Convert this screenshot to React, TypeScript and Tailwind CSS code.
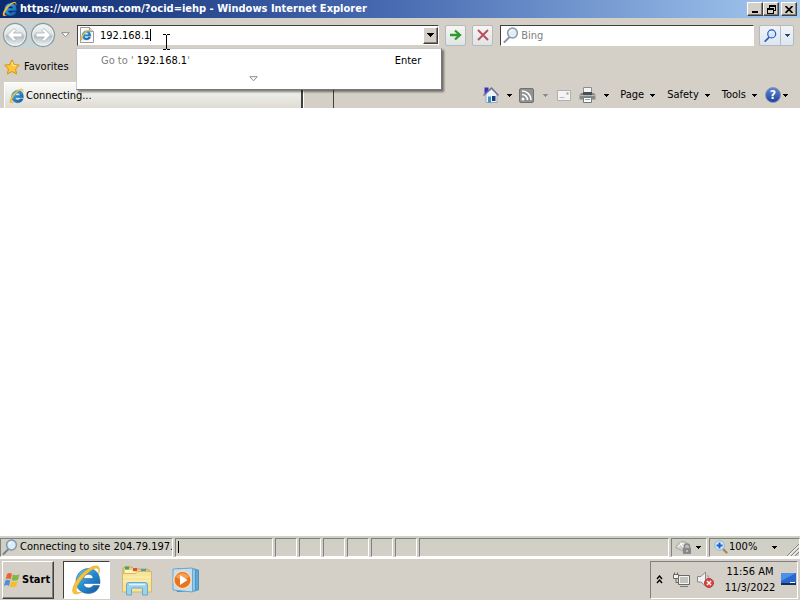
import React, { useId, useState } from "react";

function IELogo({ className }: { className: string }) {
  const id = useId();
  return (
    <svg viewBox="0 0 32 32" className={className} aria-hidden="true">
      <defs>
        <linearGradient id={id} x1="0" y1="0" x2="1" y2="1">
          <stop offset="0" stopColor="#69c8f4" />
          <stop offset=".5" stopColor="#2389cf" />
          <stop offset="1" stopColor="#14559e" />
        </linearGradient>
      </defs>
      <path d="M29 19.500H12.500c.3 2.700 2.200 4.400 5 4.400 2 0 3.600-.9 4.500-2.300h6.500C27 26.600 23 29.500 17.500 29.500 10.500 29.500 5 24.700 5 17.500 5 10 10.500 4.500 17.500 4.500S29.300 10 29 19.500ZM12.500 14.500h9.700c-.4-2.700-2-4.200-4.700-4.200s-4.500 1.500-5 4.200Z" fill={`url(#${id})`} stroke="#16528f" strokeWidth=".5" />
      <path d="M27.500 10.500c2-5 1.300-8.700-2.500-8.700C18 1.800 3 15 1.600 26c-.4 4.500 3.400 5.300 9.100 2-4 1.200-6.100.2-5.300-3C7 17.500 18.500 5.500 24.500 4.200c3-.5 3.800 2 3 6.300Z" fill="#f6c338" stroke="#d9a01c" strokeWidth=".4" />
    </svg>
  );
}

function Down({ className }: { className: string }) {
  return (
    <svg viewBox="0 0 5 3" className={`h-[3px] w-[5px] shrink-0 ${className}`} shapeRendering="crispEdges" aria-hidden="true">
      <path d="M0 0h5v1H4v1H3v1H2V2H1V1H0Z" fill="currentColor" />
    </svg>
  );
}

function HollowDown() {
  return (
    <svg viewBox="0 0 9 6" className="h-[6px] w-[9px] shrink-0 text-[#8c8c8c]" aria-hidden="true">
      <path d="M.8.7h7.400L4.500 4.800Z" fill="#fff" stroke="currentColor" />
    </svg>
  );
}

function RoundArrow({ back = false }: { back?: boolean }) {
  const id = useId();
  return (
    <svg viewBox="0 0 26 26" className="size-[26px]" aria-hidden="true">
      <defs>
        <linearGradient id={id} x1="0" y1="0" x2="0" y2="1">
          <stop offset="0" stopColor="#f4f7f7" />
          <stop offset=".45" stopColor="#dce2e3" />
          <stop offset=".55" stopColor="#b5bfc2" />
          <stop offset="1" stopColor="#eef6f6" />
        </linearGradient>
      </defs>
      <circle cx="13" cy="13" r="11.500" fill={`url(#${id})`} stroke="#909a9e" strokeWidth="1.300" />
      <circle cx="13" cy="13" r="10.200" fill="none" stroke="#eef3f4" strokeWidth="1" />
      <path transform={back ? undefined : "matrix(-1 0 0 1 26 0)"} d="M5.500 13l6.500-6.500 2 2L11.500 11H20v4h-8.500l2.500 2.500-2 2Z" fill="#fff" stroke="#9da7ab" strokeWidth=".7" />
    </svg>
  );
}

function Lens({ className, stroke, fill, handle }: { className: string; stroke: string; fill: string; handle: string }) {
  return (
    <svg viewBox="0 0 16 16" className={className} aria-hidden="true">
      <path d="M6.500 10 1.500 15" stroke={handle} strokeWidth="2" strokeLinecap="round" />
      <circle cx="9.500" cy="6" r="4.900" fill={fill} stroke={stroke} strokeWidth="1.500" />
      <path d="M7 5.500a2.800 2.800 0 0 1 2.500-2.300" fill="none" stroke="#fff" />
    </svg>
  );
}

const raised = "border border-t-white border-l-white border-r-[#404040] border-b-[#404040] bg-[#d4d0c8] shadow-[inset_-1px_-1px_0_#808080]";
const sunken = "border border-t-[#808080] border-l-[#808080] border-r-white border-b-white";

function TitleBar() {
  return (
    <header className="flex h-[18px] items-center bg-linear-to-r from-[#0c2a70] via-[#4a6cb2] to-[#a6caf0] pr-[3px] pl-[2px]">
      <IELogo className="size-4" />
      <h1 className="ml-[2px] flex-1 text-[11px] leading-[18px] font-bold whitespace-nowrap text-white">
        https://www.msn.com/?ocid=iehp - Windows Internet Explorer
      </h1>
      <button aria-label="Minimize" className={`flex h-[14px] w-4 items-end justify-center pb-[2px] ${raised}`}>
        <span className="h-[2px] w-[6px] bg-black" />
      </button>
      <button aria-label="Restore" className={`flex h-[14px] w-4 items-center justify-center ${raised}`}>
        <svg viewBox="0 0 9 9" className="size-[9px]" shapeRendering="crispEdges" fill="none" stroke="#000">
          <path d="M2.500 3V.5h6v5H7M2 1.500h7M.5 3.500h6v5h-6ZM0 4.500h7" />
        </svg>
      </button>
      <button aria-label="Close" className={`ml-[2px] flex h-[14px] w-4 items-center justify-center ${raised}`}>
        <svg viewBox="0 0 8 7" className="h-[7px] w-2" stroke="#000" strokeWidth="1.700">
          <path d="M.5 0l7 7M7.500 0l-7 7" />
        </svg>
      </button>
    </header>
  );
}

function Suggestions({ value }: { value: string }) {
  return (
    <div className="absolute top-[22px] -right-[4px] -left-[2px] z-10 h-[42px] border border-[#c8c8c8] border-r-[#777] border-b-[#777] bg-white shadow-[2px_2px_2px_#0007]">
      <div className="flex h-6 items-center pr-[20px] pl-[24px]">
        <span className="flex-1 text-[#808080]">
          Go to ' <span className="text-black">{value}</span>'
        </span>
        <span>Enter</span>
      </div>
      <div className="flex h-3 items-center justify-center pr-3">
        <HollowDown />
      </div>
      <svg viewBox="0 0 7 16" className="absolute -top-[15px] left-[86px] h-4 w-[7px]" fill="none" stroke="#000" aria-hidden="true">
        <path d="M0 .5h3M4 .5h3M3.500 1v14M0 15.500h3M4 15.500h3" />
      </svg>
    </div>
  );
}

function NavBar() {
  const [address, setAddress] = useState("192.168.1");
  return (
    <div className="flex h-[34px] items-center pr-[6px] pl-[2px]">
      <div className="flex gap-[2px] rounded-full bg-[#c9d3d4]">
        <button aria-label="Back"><RoundArrow back /></button>
        <button aria-label="Forward"><RoundArrow /></button>
      </div>
      <button aria-label="Recent pages" className="mr-[7px] ml-[5px]"><HollowDown /></button>
      <div className="relative flex h-[21px] min-w-0 flex-[363_1_0%] items-center border border-t-[#404040] border-l-[#404040] border-r-white border-b-[#d4d0c8] bg-white pl-[2px]">
        <svg viewBox="0 0 14 16" className="h-4 w-[14px] shrink-0" aria-hidden="true">
          <path d="M.5.5h9l4 4v11H.5Z" fill="#fafafa" stroke="#9b9b9b" />
          <path d="M9.500.5v4h4" fill="#ddd" stroke="#9b9b9b" />
        </svg>
        <IELogo className="-ml-[14px] size-3 shrink-0" />
        <input aria-label="Address" value={address} onChange={(e) => setAddress(e.target.value)} className="field-sizing-content ml-2 h-[18px] outline-none" />
        <span className="h-3 w-px bg-black" />
        <button aria-label="Show address list" className={`ml-auto flex h-[17px] w-[15px] items-center justify-center ${raised}`}>
          <svg viewBox="0 0 7 4" className="h-1 w-[7px]" shapeRendering="crispEdges"><path d="M0 0h7v1H6v1H5v1H4v1H3V3H2V2H1V1H0Z" /></svg>
        </button>
        <Suggestions value={address} />
      </div>
      <button aria-label="Go" className="ml-[6px] flex size-[21px] items-center justify-center rounded-xs border border-[#b4b9bd] bg-linear-to-b from-[#f5f6f4] to-[#dfe4e5]">
        <svg viewBox="0 0 13 12" className="h-3 w-[13px]"><path d="M1 6h10M6 1.500 11 6l-5 4.500" fill="none" stroke="#2f9a28" strokeWidth="2.300" /></svg>
      </button>
      <button aria-label="Stop" className="ml-[6px] flex size-[21px] items-center justify-center rounded-xs border border-[#b4b9bd] bg-linear-to-b from-[#f5f6f4] to-[#dfe4e5]">
        <svg viewBox="0 0 12 12" className="size-3"><path d="M1 1l10 10M11 1 1 11" stroke="#b9505e" strokeWidth="2" /></svg>
      </button>
      <div className="ml-[7px] flex h-[21px] min-w-0 flex-[253_1_0%] items-center border border-t-[#404040] border-l-[#404040] border-r-white border-b-white bg-white pl-[2px]">
        <Lens className="size-4 shrink-0" stroke="#8d98a8" fill="#e3edf5" handle="#8d98a8" />
        <input aria-label="Search" placeholder="Bing" className="ml-[2px] h-[18px] min-w-0 flex-1 outline-none placeholder:text-[#808080]" />
      </div>
      <div className="ml-[5px] flex h-[21px] w-[35px] rounded-xs border border-[#b4b9bd] bg-linear-to-b from-[#eff4f8] to-[#dce6f0]">
        <button aria-label="Run search" className="flex w-[21px] items-center justify-center border-r border-[#b4bcc8]">
          <Lens className="size-[13px]" stroke="#2c59bd" fill="#d6e7fa" handle="#2c59bd" />
        </button>
        <button aria-label="Search options" className="flex flex-1 items-center justify-center"><Down className="text-[#264a70]" /></button>
      </div>
    </div>
  );
}

function CommandBar() {
  return (
    <nav className="flex h-[26px] flex-1 items-center justify-end border-l border-[#404040] pr-[12px]">
      <button aria-label="Home" className="flex items-center gap-2">
        <svg viewBox="0 0 16 16" className="size-4">
          <path d="M1.500.5h4v4.500l-4 2Z" fill="#3a30c0" />
          <path d="M3 7v8.500h11V7L8.500 2Z" fill="#eef3f7" stroke="#9aaab8" />
          <path d="M.5 8.500 8.500 1l7 7.500" fill="none" stroke="#6c7290" strokeWidth="1.400" />
          <path d="M5 9.500h3v6H5Z" fill="#3b91c9" />
          <path d="M9 9h3.500v5H9Z" fill="#173a78" />
        </svg>
        <Down className="text-black" />
      </button>
      <button aria-label="Feeds" className="ml-[7px] flex items-center gap-[9px]">
        <svg viewBox="0 0 15 15" className="size-[15px]">
          <rect x=".5" y=".5" width="14" height="14" rx="1.500" fill="#929292" stroke="#707070" />
          <circle cx="4" cy="11" r="1.500" fill="#fff" />
          <path d="M3 6.500a5.500 5.500 0 0 1 5.500 5.500M3 3a9 9 0 0 1 9 9" fill="none" stroke="#fff" strokeWidth="1.600" />
        </svg>
        <Down className="text-[#8c8c8c]" />
      </button>
      <button aria-label="Read mail" className="ml-[9px]">
        <svg viewBox="0 0 14 11" className="h-[11px] w-[14px]">
          <path d="M.5.5h13v10H.5Z" fill="#f4f4f4" stroke="#b0b0b0" />
          <path d="M2.500 7.500h5" stroke="#bbb" />
          <path d="M9.500 2.500h2v2h-2Z" fill="#9a9a9a" />
        </svg>
      </button>
      <button aria-label="Print" className="ml-2 flex items-center gap-2">
        <svg viewBox="0 0 17 16" className="h-4 w-[17px]">
          <path d="M4.500.5h8v6h-8Z" fill="#f5f5f5" stroke="#8c8c8c" />
          <path d="M2 6h13l1.500 2v4.500H.5V8Z" fill="#85898a" />
          <path d="M4 5h9v3H4Z" fill="#4a4f52" />
          <path d="M1 8.500h15" stroke="#b5babc" />
          <path d="M4.500 10.500h8v5h-8Z" fill="#fff" stroke="#737a7d" />
          <path d="M6 12.500h5" stroke="#70af8b" />
        </svg>
        <Down className="text-black" />
      </button>
      <button className="ml-[11px] flex items-center gap-[6px]">Page<Down className="text-black" /></button>
      <button className="ml-[12px] flex items-center gap-[6px]">Safety<Down className="text-black" /></button>
      <button className="ml-[12px] flex items-center gap-[6px]">Tools<Down className="text-black" /></button>
      <button aria-label="Help" className="ml-2 flex items-center gap-[2px]">
        <span className="flex size-4 items-center justify-center rounded-full border border-[#8394b5] bg-linear-to-b from-[#5d84d2] to-[#1c459c] text-[12px] font-bold text-white">?</span>
        <Down className="text-black" />
      </button>
    </nav>
  );
}

function StatusBar() {
  return (
    <footer className="flex h-[22px] items-center gap-[2px] border-t border-b border-t-[#d4d0c8] border-b-white bg-linear-to-b from-[#cdcfc2] to-[#d4d0c8] py-px">
      <div className={`flex h-[19px] w-[173px] items-center gap-[2px] overflow-hidden pl-px whitespace-nowrap ${sunken}`}>
        <Lens className="size-4 shrink-0" stroke="#8496ad" fill="#dcecf8" handle="#7c8490" />
        <span>Connecting to site 204.79.197.</span>
      </div>
      <div className={`flex h-[19px] w-[98px] items-center pl-[2px] ${sunken}`}><span className="h-3 w-px bg-black" /></div>
      {[0, 1, 2, 3, 4, 5].map((n) => <div key={n} className={`h-[19px] w-[22px] ${sunken}`} />)}
      <div className={`h-[19px] flex-1 ${sunken}`} />
      <button aria-label="Security" className={`flex h-[19px] w-9 items-center justify-between pr-[5px] pl-[3px] ${sunken}`}>
        <svg viewBox="0 0 17 15" className="h-[15px] w-[17px]">
          <path d="M1 8a7 7 0 0 1 11-5v5H8v3Z" fill="#cfd0cc" stroke="#a8a8a8" />
          <path d="M3 7l3-3 2 3M5 3l4 1" stroke="#fff" fill="none" />
          <path d="M9.500 8V6.500a2.500 2.500 0 0 1 5 0V8" fill="none" stroke="#888" strokeWidth="1.500" />
          <path d="M8 8h8v6H8Z" fill="#888" />
          <path d="M12 10v2" stroke="#eee" />
        </svg>
        <Down className="text-black" />
      </button>
      <div className={`flex h-[19px] w-[91px] items-center overflow-hidden pl-[4px] ${sunken}`}>
        <button className="flex flex-1 items-center">
          <svg viewBox="0 0 14 14" className="mr-px size-[14px]">
            <path d="M8 8l4.500 4.500" stroke="#a68664" strokeWidth="2.400" strokeLinecap="round" />
            <circle cx="5.500" cy="5.500" r="4.800" fill="#d7edff" stroke="#8dafd0" />
            <path d="M5.500 2.500v6M2.500 5.500h6" stroke="#1d64c2" strokeWidth="2" />
          </svg>
          100%
          <Down className="ml-[15px] text-black" />
        </button>
        <svg viewBox="0 0 12 12" className="size-3 self-end" stroke="#858585"><path d="M0 12 12 0M4 12l8-8M8 12l4-4" /><path d="M1 12.500 12 1.500M5 12.500l7-7" stroke="#fff" /></svg>
      </div>
    </footer>
  );
}

function Taskbar() {
  return (
    <footer className="flex h-[42px] items-center border-t border-white bg-[#d4d0c8] pr-[2px] pl-[2px]">
      <button className={`flex h-[38px] w-[52px] items-center gap-[2px] pl-px font-bold ${raised}`}>
        <svg viewBox="0 0 16 16" className="size-4">
          <path d="M3 2c2-1.500 3.500-1 5 0L6.600 7.500c-1.500-1-3-1.500-5 0Z" fill="#ed6134" />
          <path d="M9 2.500c2 1 4 1 6.500-.3L14 7.700c-2 1.200-4.500 1.200-6.500.3Z" fill="#80b843" />
          <path d="M1.300 8.700c2-1.500 3.500-1 5 0L4.900 14c-1.500-1-3-1.500-5 0Z" fill="#4b91d4" />
          <path d="M7.200 9.300c2 1 4 1 6.500-.3l-1.500 5.300c-2 1.200-4.500 1.200-6.500.3Z" fill="#f5bd27" />
        </svg>
        Start
      </button>
      <button aria-label="Internet Explorer" className="ml-[9px] flex h-[38px] w-[47px] items-center justify-center border border-t-[#404040] border-l-[#404040] border-r-white border-b-white bg-white">
        <IELogo className="size-8" />
      </button>
      <button aria-label="Windows Explorer" className="ml-[10px]">
        <svg viewBox="0 0 34 32" className="h-8 w-[34px]">
          <path d="M3 4.500 4.500 3H12l2 2h13l3 2v19H3Z" fill="#edcf77" stroke="#c5a657" />
          <path d="M5 2.500h4v3H5Z" fill="#45a55b" />
          <path d="M13 4h4v3h-4Z" fill="#d35440" />
          <path d="M21 5h5v3h-5Z" fill="#4d9acd" />
          <path d="M5 6h7l2 2h15v4H5Z" fill="#fff4bd" />
          <path d="M2.500 9.500H16l2-2h13.500v20.500h-29Z" fill="#f6e49a" stroke="#d3b865" />
          <path d="M3 13h28M3 17h28" stroke="#fff1b2" />
          <path d="M6.500 31V21q0-2.500 2.500-2.500h16q2.500 0 2.500 2.500v10h-5v-6q0-1-1-1h-9q-1 0-1 1v6Z" fill="#9bd2ec" stroke="#6aa8cc" />
          <path d="M9 20.500h16" stroke="#dff4ff" strokeWidth="1.500" />
        </svg>
      </button>
      <button aria-label="Windows Media Player" className="ml-[18px]">
        <svg viewBox="0 0 28 26" className="h-[26px] w-7">
          <path d="M8 1.500 26.500 3v20L8 24.500Z" fill="#5fa5d5" stroke="#4f8fb9" />
          <path d="M5 1.500 23.500 2v22L5 24.500Z" fill="#8fc7e6" stroke="#4e94c3" />
          <path d="M1 2l19.500-1v24L1 23Z" fill="#c2dff0" stroke="#6ba7cf" />
          <circle cx="10.500" cy="13" r="8.700" fill="#e8741f" stroke="#f8d8b5" strokeWidth="1.500" />
          <path d="M4 10a7.500 7.500 0 0 1 13 0Q10.500 15 4 10" fill="#f3a254" />
          <path d="M8 8v10l7.500-5Z" fill="#fff" />
        </svg>
      </button>
      <div className={`ml-auto flex h-[38px] w-[148px] items-center pl-[5px] ${sunken}`}>
        <button aria-label="Show hidden icons">
          <svg viewBox="0 0 7 9" className="h-[9px] w-[7px]" fill="none" stroke="#000" strokeWidth="1.400"><path d="m1 4 2.500-3L6 4M1 8l2.500-3L6 8" /></svg>
        </button>
        <button aria-label="Network" className="ml-[10px]">
          <svg viewBox="0 0 17 16" className="h-4 w-[17px]">
            <path d="M5.500 3.500h11v9h-11Z" fill="#c2c2be" stroke="#6a6a6a" />
            <path d="M6.500 4.500h9v7h-9Z" fill="none" stroke="#f5f5f5" />
            <path d="M7 14.500h8" stroke="#777" />
            <path d="M3 6v4.500h3" fill="none" stroke="#666" />
            <path d="M1.500.5v2M4.500.5v2M.5 2.500h5v4h-5Z" fill="#f5f5f5" stroke="#666" />
          </svg>
        </button>
        <button aria-label="Volume muted" className="ml-[7px]">
          <svg viewBox="0 0 17 17" className="size-[17px]">
            <path d="M.5 5.500H4L8.500 1v14L4 11H.5Z" fill="#f1f1f1" stroke="#888" />
            <path d="M10.500 4q3 4 0 8" fill="none" stroke="#999" />
            <circle cx="12" cy="12" r="4.500" fill="#d94744" stroke="#b53a3a" />
            <path d="m10 10 4 4m0-4-4 4" stroke="#fff" strokeWidth="1.400" />
          </svg>
        </button>
        <time dateTime="2022-11-03T11:56" className="flex-1 pl-[5px] text-center leading-4">11:56 AM<br />11/3/2022</time>
        <button aria-label="Show desktop">
          <svg viewBox="0 0 16 14" className="h-[14px] w-4">
            <path d="M0 0h15v11H0Z" fill="#2869d1" />
            <path d="M0 0h15L0 8Z" fill="#4b91e6" />
            <path d="M0 10h15v2H0Z" fill="#172e58" />
            <path d="M9 9h5v1H9Z" fill="#fff" />
          </svg>
        </button>
      </div>
    </footer>
  );
}

export default function App() {
  return (
    <div className="flex min-h-screen flex-col bg-[#d4d0c8] font-['DejaVu_Sans_Condensed','DejaVu_Sans',sans-serif] text-[11px] leading-4 text-black">
      <TitleBar />
      <NavBar />
      <div className="flex h-[30px] items-center pl-1">
        <button className="flex items-center gap-1">
          <svg viewBox="0 0 16 16" className="size-4"><path d="m8 .8 2.200 4.700 5.200.7-3.800 3.600.9 5.200L8 12.500 3.500 15l.9-5.200L.6 6.200l5.200-.7Z" fill="#fbc83c" stroke="#d89216" /><path d="m8 3 1.200 3.500H12" stroke="#fff0a0" fill="none" /></svg>
          Favorites
        </button>
      </div>
      <div className="flex h-[26px]">
        <div className="ml-1 flex w-[299px] items-center gap-px border-t border-l border-r-2 border-t-white border-l-white border-r-[#404040] bg-linear-to-b from-[#fafaf8] to-[#dedcd4] pl-1">
          <IELogo className="size-4" />
          <span>Connecting...</span>
        </div>
        <button aria-label="New tab" className="w-[30px] border-l border-white" />
        <CommandBar />
      </div>
      <main className="flex-1 bg-white" />
      <StatusBar />
      <Taskbar />
    </div>
  );
}
